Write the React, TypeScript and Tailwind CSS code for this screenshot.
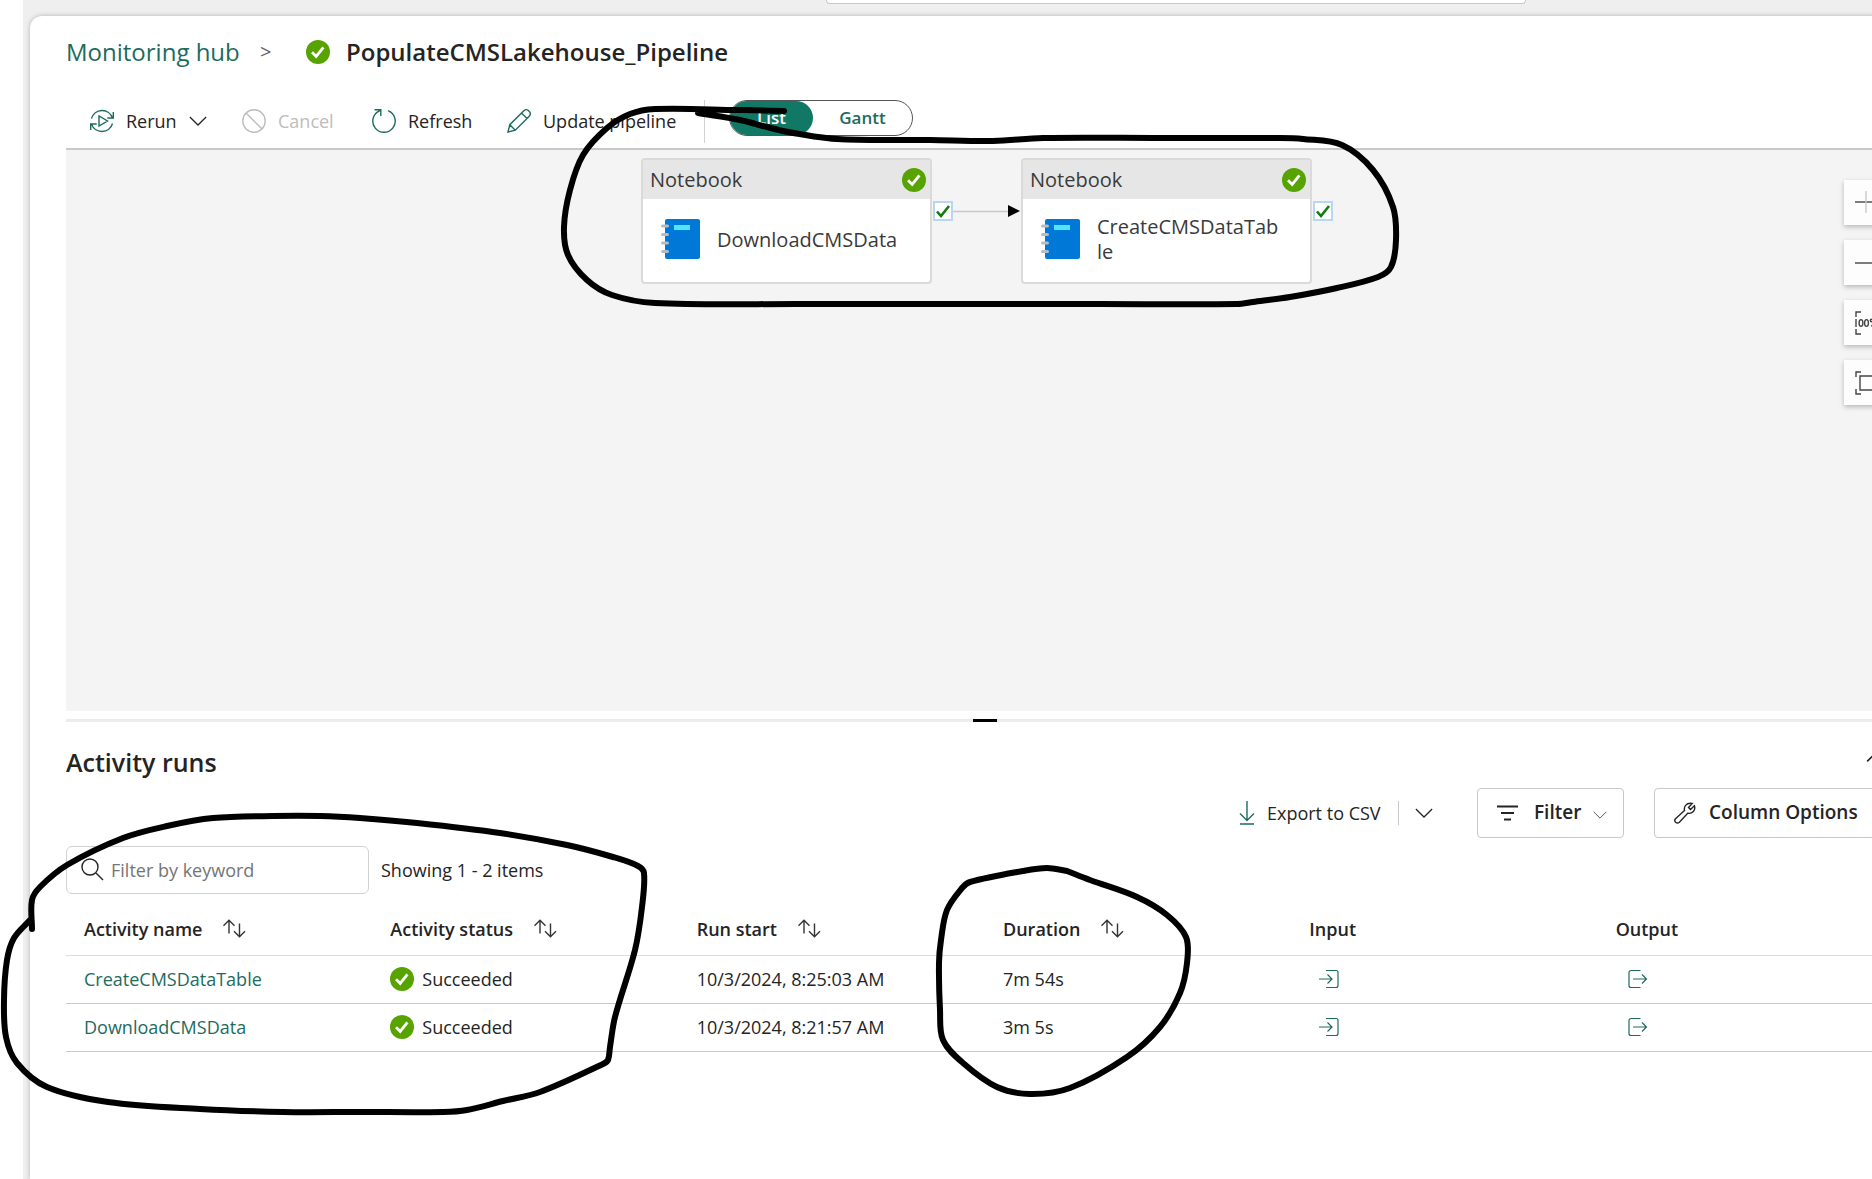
import type { ReactNode } from "react";

type Point = [number, number];

const ringPipeline: Point[] = [
  [784, 111], [737, 110], [655, 109], [630, 114], [607, 128], [583, 155], [570, 190], [564, 227],
  [568, 255], [587, 280], [612, 295], [655, 303], [800, 304], [1100, 304], [1237, 304], [1253, 302],
  [1290, 297], [1337, 288], [1378, 277], [1391, 267], [1396, 240], [1393, 207], [1373, 170],
  [1342, 145], [1303, 139], [1280, 138], [1160, 138], [1043, 138], [993, 141], [930, 140], [837, 139], [783, 131],
  [740, 120], [698, 113],
];

const ringActivities: Point[] = [
  [32, 929], [32, 900], [40, 887], [67, 865], [123, 838], [167, 826], [213, 818], [273, 816],
  [320, 816], [360, 818], [417, 823], [500, 833], [567, 845], [613, 857], [638, 866], [644, 873],
  [642, 907], [635, 950], [615, 1017], [610, 1047], [608, 1060], [603, 1064], [540, 1092],
  [503, 1101], [467, 1110], [443, 1112], [360, 1112], [283, 1112], [200, 1109], [108, 1102],
  [47, 1087], [17, 1063], [6, 1037], [4, 1000], [7, 960], [14, 938], [30, 920],
];

const ringDuration: Point[] = [
  [1067, 871], [1047, 868], [1023, 871], [970, 882], [962, 888], [947, 910], [941, 940], [939, 963],
  [940, 1010], [943, 1040], [963, 1063], [997, 1087], [1030, 1094], [1070, 1088], [1127, 1057],
  [1160, 1027], [1180, 993], [1187, 963], [1186, 937], [1167, 915], [1137, 897], [1090, 880],
  [1067, 871],
];

function smooth(points: Point[]) {
  let d = `M${points[0][0]} ${points[0][1]}`;
  for (let i = 0; i < points.length - 1; i++) {
    const a = points[Math.max(i - 1, 0)];
    const b = points[i];
    const c = points[i + 1];
    const e = points[Math.min(i + 2, points.length - 1)];
    const span = Math.hypot(c[0] - b[0], c[1] - b[1]);
    const k1 = span / (3 * Math.max(1, (Math.hypot(c[0] - a[0], c[1] - a[1]))));
    const k2 = span / (3 * Math.max(1, (Math.hypot(e[0] - b[0], e[1] - b[1]))));
    d += `C${b[0] + (c[0] - a[0]) * k1} ${b[1] + (c[1] - a[1]) * k1} ${c[0] - (e[0] - b[0]) * k2} ${c[1] - (e[1] - b[1]) * k2} ${c[0]} ${c[1]}`;
  }
  return d;
}

function Icon({ children, className = "size-6", box = 24 }: { children: ReactNode; className?: string; box?: number }) {
  return (
    <svg
      viewBox={`0 0 ${box} ${box}`}
      className={`shrink-0 ${className}`}
      fill="none"
      stroke="currentColor"
      strokeWidth="1.4"
      aria-hidden="true"
    >
      {children}
    </svg>
  );
}

function Success() {
  return (
    <Icon>
      <circle cx="12" cy="12" r="12" fill="#57a300" stroke="none" />
      <path d="M6 12.2l4.2 4.2 7.2-9" stroke="#fff" strokeWidth="2.8" />
    </Icon>
  );
}

function Chevron({ className = "size-[18px]" }: { className?: string }) {
  return (
    <Icon box={20} className={className}>
      <path d="M1 5.500l9 9 9-9" />
    </Icon>
  );
}

function SortArrows() {
  return (
    <Icon className="size-6 text-[#333]">
      <path d="M7 16.500V3.500M1.500 8.800L7 3.300l5.500 5.500M17.500 6.500V19.500M12 14.200l5.500 5.500 5.500-5.500" />
    </Icon>
  );
}

function NotebookIcon() {
  return (
    <svg viewBox="0 0 40 42" className="h-[42px] w-10 shrink-0" aria-hidden="true">
      <rect x="4" y="1" width="35" height="40" rx="2" fill="#0078d7" />
      <rect x="13" y="7" width="16" height="5" fill="#50e6ff" />
      {[8, 16.5, 25, 33.5].map((y) => (
        <rect key={y} x="0" y={y - 1.5} width="8" height="3" rx="1.5" fill="#b5bcc4" />
      ))}
    </svg>
  );
}

function PipelineNode({ name, place }: { name: string; place: string }) {
  return (
    <div className={`absolute top-2 ${place} h-[126px] w-[291px] rounded-sm border-2 border-[#dadada] bg-white text-xl text-[#3b3a39]`}>
      <div className="flex h-[39px] items-center justify-between bg-[#e6e6e6] pr-1 pl-[7px]">
        <span>Notebook</span>
        <Success />
      </div>
      <div className="flex h-20 items-center pl-[18px]">
        <NotebookIcon />
        <span className="ml-4 w-[184px] leading-[25px] break-all">{name}</span>
      </div>
      <span className="absolute top-[41px] -right-[23px] flex size-5 items-center justify-center border-2 border-[#b9d6f2] bg-white text-[#107c10]">
        <Icon box={16} className="size-4">
          <path d="M2 8.500l4 4.500 8-10" strokeWidth="2.600" />
        </Icon>
      </span>
    </div>
  );
}

function ZoomButton({ label, children }: { label: string; children: ReactNode }) {
  return (
    <button aria-label={label} className="flex size-[45px] items-center justify-center bg-[#fdfdfd] text-[#444] shadow-[0_2px_5px_rgba(0,0,0,0.25)]">
      {children}
    </button>
  );
}

const corners = "M6 1H1v5M18 1h5v5M6 23H1v-5M18 23h5v-5";

const runs = [
  { name: "CreateCMSDataTable", start: "10/3/2024, 8:25:03 AM", duration: "7m 54s" },
  { name: "DownloadCMSData", start: "10/3/2024, 8:21:57 AM", duration: "3m 5s" },
];

const columns = [
  { label: "Activity name", sortable: true },
  { label: "Activity status", sortable: true },
  { label: "Run start", sortable: true },
  { label: "Duration", sortable: true },
  { label: "Input", sortable: false },
  { label: "Output", sortable: false },
];

export default function App() {
  return (
    <div className="relative flex min-h-screen flex-col overflow-hidden bg-[#efefef] font-['Open_Sans',sans-serif] text-lg text-[#242424]">
      <div className="flex flex-1">
        <aside className="w-[23px] shrink-0 bg-white" />
        <div className="flex min-w-0 flex-1 flex-col pl-[7px]">
          <div className="flex h-4 shrink-0 justify-center pl-[450px]">
            <div className="h-1 w-[700px] rounded-b-md border border-t-0 border-[#c8c8c8] bg-white" />
          </div>
          <main className="-mr-8 flex-1 rounded-tl-xl bg-white pl-9 shadow-[0_0_5px_rgba(0,0,0,0.25)]">
            <header className="flex h-[72px] items-center text-2xl">
              <a href="#hub" className="w-[194px] text-[#1d6b5e]">Monitoring hub</a>
              <span className="w-[46px] text-xl text-[#616161]">&gt;</span>
              <Success />
              <h1 className="ml-4 font-semibold">PopulateCMSLakehouse_Pipeline</h1>
            </header>

            <div className="flex h-[62px] items-center border-b-2 border-[#c8c8c8] pt-[6px] pl-6">
              <button className="flex w-[152px] items-center gap-3">
                <Icon className="size-6 text-[#1d6b5e]">
                  <path d="M1.500 9.500A11 11 0 0 1 22.500 9M23.300 3v6h-6M22.500 14.500A11 11 0 0 1 1.500 15M.700 21v-6h6M9 7v10l8.500-5z" />
                </Icon>
                Rerun
                <Chevron />
              </button>
              <button disabled className="flex w-[130px] items-center gap-3 text-[#bdbdbd]">
                <Icon>
                  <circle cx="12" cy="12" r="11.200" />
                  <path d="M4 4l16 16" />
                </Icon>
                Cancel
              </button>
              <button className="flex w-[135px] items-center gap-3">
                <Icon className="size-6 text-[#1d6b5e]">
                  <path d="M16 1.600A11.200 11.200 0 1 1 8 1.600M2.500.800h6.300v6.300" />
                </Icon>
                Refresh
              </button>
              <button className="flex w-[197px] items-center gap-3">
                <Icon className="size-6 text-[#1d6b5e]">
                  <path d="M1 23l1.800-7.300L16.800 1.700a3.300 3.300 0 0 1 4.800 0l.700.700a3.300 3.300 0 0 1 0 4.800L8.300 21.200zM14.500 4l5.500 5.500M2.800 15.700l5.500 5.500" />
                </Icon>
                Update pipeline
              </button>
              <div className="h-[43px] w-px bg-[#d1d1d1]" />
              <div className="mb-[6px] ml-6 flex h-9 w-[184px] rounded-full border border-[#555] text-[17px] font-semibold">
                <button aria-pressed="true" className="w-[83px] rounded-full bg-[#117865] text-white">List</button>
                <button aria-pressed="false" className="flex-1 text-[#1d6b5e]">Gantt</button>
              </div>
            </div>

            <section aria-label="Pipeline canvas" className="relative h-[561px] bg-[#f4f4f4]">
              <PipelineNode name="DownloadCMSData" place="left-[575px]" />
              <svg className="absolute top-[55px] left-[887px] h-3 w-[67px]" viewBox="0 0 67 12" aria-hidden="true">
                <path d="M0 6.500h56" stroke="#c8c8c8" strokeWidth="1.500" />
                <path d="M55 0l12 6-12 6z" fill="#000" />
              </svg>
              <PipelineNode name="CreateCMSDataTable" place="left-[955px]" />
              <div className="absolute top-[30px] right-[15px] flex flex-col gap-[15px]">
                <ZoomButton label="Zoom in">
                  <Icon><path d="M0 11h24" /><path d="M11 0v22" stroke="#c8c8c8" /></Icon>
                </ZoomButton>
                <ZoomButton label="Zoom out">
                  <Icon><path d="M0 12h24" /></Icon>
                </ZoomButton>
                <ZoomButton label="Zoom to 100%">
                  <Icon>
                    <path d={corners} />
                    <path d="M1 8v8" />
                    <ellipse cx="6" cy="12" rx="1.900" ry="3.400" />
                    <ellipse cx="11.500" cy="12" rx="1.900" ry="3.400" />
                    <path d="M16.500 15.500l4-7" />
                    <circle cx="16.500" cy="9.500" r="1.200" />
                    <circle cx="20.500" cy="14.500" r="1.200" />
                  </Icon>
                </ZoomButton>
                <ZoomButton label="Zoom to fit">
                  <Icon><path d={corners} /><path d="M5 5h14v14H5z" /></Icon>
                </ZoomButton>
              </div>
            </section>

            <div className="mt-2 flex h-[3px] justify-center bg-[#ececec]">
              <div className="h-full w-6 bg-black" />
            </div>

            <div className="flex h-[66px] items-end justify-between pt-5 pr-[14px]">
              <h2 className="mb-[10px] text-[25px] leading-8 font-semibold">Activity runs</h2>
              <button aria-label="Collapse" className="mb-5 rotate-180">
                <Chevron className="size-6" />
              </button>
            </div>

            <div className="flex h-[50px] items-center justify-end">
              <button className="flex w-[163px] items-center gap-2 whitespace-nowrap">
                <Icon className="size-6 text-[#1d6b5e]">
                  <path d="M12 0v19M5 12.500l7 7 7-7M5 23h14" />
                </Icon>
                Export to CSV
              </button>
              <button aria-label="Export choices" className="mr-11 border-l border-[#c8c8c8] py-[3px] pl-4">
                <Chevron />
              </button>
              <button className="flex h-[50px] w-[147px] items-center rounded-sm border border-[#c8c8c8] pl-[18px] text-[19px] font-semibold">
                <Icon className="mr-[14px] size-6">
                  <path d="M1 5.500h21M5 12h13M8 18.500h7" strokeWidth="1.800" />
                </Icon>
                Filter
                <Chevron className="mt-1 ml-3 size-[14px] text-[#555]" />
              </button>
              <button className="ml-[30px] flex h-[50px] w-[250px] items-center rounded-sm border border-[#c8c8c8] pl-[18px] text-[19px] font-semibold">
                <Icon className="mr-3 size-6">
                  <path d="M2.500 17.800l9-8.400c-.900-3.600 1.800-7.300 6-7.200l1.700.300-3.700 3.900 2 2 3.900-3.700c1.600 4.500-2.300 8.500-6.700 7.500l-8.300 9c-2.600 2.200-6-.900-3.900-3.400z" />
                </Icon>
                Column Options
              </button>
            </div>

            <div className="mt-2 flex items-center gap-3">
              <label className="flex h-12 w-[303px] items-center rounded-md border border-[#d1d1d1] pl-[14px]">
                <Icon className="mr-[6px] size-6">
                  <circle cx="9" cy="9" r="8" />
                  <path d="M15 15l7 7" />
                </Icon>
                <input
                  type="text"
                  aria-label="Filter by keyword"
                  placeholder="Filter by keyword"
                  className="w-56 bg-transparent outline-none placeholder:text-[#757575]"
                />
              </label>
              <span>Showing 1 - 2 items</span>
            </div>

            <table className="mt-[13px] w-full table-fixed text-left">
              <thead>
                <tr className="h-12 border-b border-[#dcdcdc]">
                  {columns.map((c) => (
                    <th key={c.label} scope="col" className="pb-1 pl-[18px] font-semibold">
                      {c.sortable ? (
                        <button className="flex items-center gap-5">
                          {c.label}
                          <SortArrows />
                        </button>
                      ) : (
                        c.label
                      )}
                    </th>
                  ))}
                </tr>
              </thead>
              <tbody>
                {runs.map((r) => (
                  <tr key={r.name} className="h-12 border-b border-[#c8c8c8]">
                    <td className="pl-[18px]"><a href={`#${r.name}`} className="text-[#1d6b5e]">{r.name}</a></td>
                    <td className="pl-[18px]">
                      <span className="flex items-center gap-2"><Success />Succeeded</span>
                    </td>
                    <td className="pl-[18px]">{r.start}</td>
                    <td className="pl-[18px]">{r.duration}</td>
                    <td className="pl-7 text-[#1d6b5e]">
                      <button aria-label={`Input of ${r.name}`} className="block">
                        <Icon box={20} className="size-5">
                          <path d="M7 1.500h10a2 2 0 0 1 2 2v13a2 2 0 0 1-2 2H7M0 10h13M8.500 5.500L13 10l-4.500 4.500" strokeWidth="1.200" />
                        </Icon>
                      </button>
                    </td>
                    <td className="pl-[30px] text-[#1d6b5e]">
                      <button aria-label={`Output of ${r.name}`} className="block">
                        <Icon box={20} className="size-5">
                          <path d="M12.500 1.500H3a2 2 0 0 0-2 2v13a2 2 0 0 0 2 2h9.500M5 10h13.500M14 5.500l4.500 4.500-4.500 4.500" strokeWidth="1.200" />
                        </Icon>
                      </button>
                    </td>
                  </tr>
                ))}
              </tbody>
            </table>
          </main>
        </div>
      </div>

      <svg
        className="pointer-events-none absolute inset-0 h-full w-full"
        fill="none"
        stroke="#000"
        strokeWidth="6"
        strokeLinecap="round"
        strokeLinejoin="round"
        aria-hidden="true"
      >
        <path d={smooth(ringPipeline)} />
        <path d={smooth(ringActivities)} />
        <path d={smooth(ringDuration)} />
      </svg>
    </div>
  );
}
